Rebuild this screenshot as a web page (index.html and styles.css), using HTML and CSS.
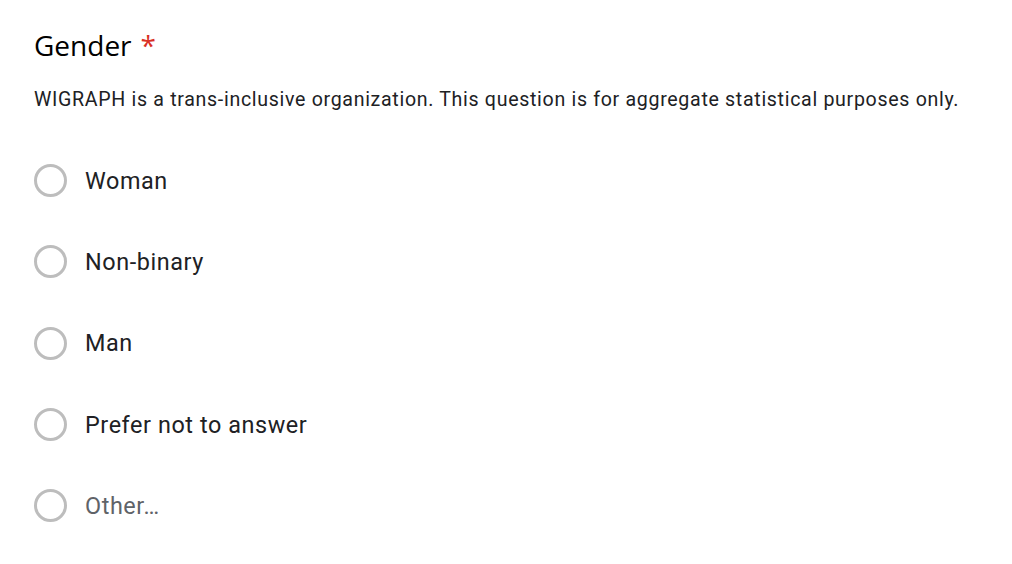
FILE: index.html
```html
<!DOCTYPE html>
<html>
<head>
<meta charset="utf-8">
<link rel="stylesheet" href="styles.css">
</head>
<body>
<div class="question">
  <div class="title">Gender<span class="req">*</span></div>
  <div class="desc">WIGRAPH is a trans-inclusive organization. This question is for aggregate statistical purposes only.</div>
  <div class="options">
    <div class="opt"><span class="radio"></span><span class="label">Woman</span></div>
    <div class="opt"><span class="radio"></span><span class="label">Non-binary</span></div>
    <div class="opt"><span class="radio"></span><span class="label">Man</span></div>
    <div class="opt"><span class="radio"></span><span class="label">Prefer not to answer</span></div>
    <div class="opt"><span class="radio"></span><span class="label other">Other…</span></div>
  </div>
</div>
</body>
</html>
```
FILE: styles.css
```css
html, body {
  margin: 0;
  padding: 0;
  background: #fff;
}
body {
  font-family: Roboto, "Liberation Sans", sans-serif;
  color: #202124;
}
.question {
  padding: 28px 34px 0 34px;
}
.title {
  font-family: "Open Sans", Roboto, sans-serif;
  font-size: 28px;
  line-height: 34px;
  color: #000;
}
.req {
  color: #d93025;
  margin-left: 9px;
}
.desc {
  margin-top: 24px;
  font-size: 19.6px;
  letter-spacing: 0.68px;
  line-height: 28px;
}
.options {
  margin-top: 26px;
  display: flex;
  flex-direction: column;
}
.opt {
  display: flex;
  align-items: center;
  height: 81.3px;
}
.radio {
  width: 27px;
  height: 27px;
  border: 3px solid #bdbdbd;
  border-radius: 50%;
  box-sizing: content-box;
  flex: none;
}
.label {
  margin-left: 18px;
  font-size: 23.4px;
  letter-spacing: 0.58px;
}
.other {
  color: #5f6368;
}
```
